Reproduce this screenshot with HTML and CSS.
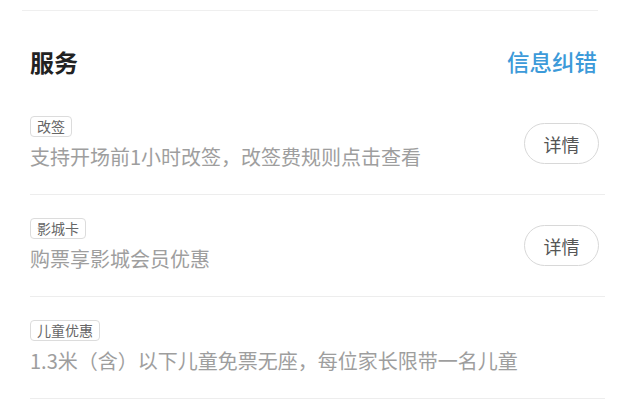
FILE: index.html
```html
<!DOCTYPE html>
<html lang="zh-CN">
<head>
<meta charset="utf-8">
<link rel="stylesheet" href="styles.css">
</head>
<body>
<div class="prev-divider"></div>
<section class="service">
  <header class="service-head">
    <h2 class="service-title">服务</h2>
    <a class="service-link">信息纠错</a>
  </header>
  <ul class="service-list">
    <li class="service-item">
      <div class="service-info">
        <span class="tag">改签</span>
        <p class="desc">支持开场前1小时改签，改签费规则点击查看</p>
      </div>
      <button class="detail-btn">详情</button>
    </li>
    <li class="service-item">
      <div class="service-info">
        <span class="tag">影城卡</span>
        <p class="desc">购票享影城会员优惠</p>
      </div>
      <button class="detail-btn">详情</button>
    </li>
    <li class="service-item">
      <div class="service-info">
        <span class="tag">儿童优惠</span>
        <p class="desc">1.3米（含）以下儿童免票无座，每位家长限带一名儿童</p>
      </div>
    </li>
  </ul>
</section>
</body>
</html>
```
FILE: styles.css
```css
* { box-sizing: border-box; }
body {
  margin: 0;
  background: #fff;
  font-family: "Noto Sans CJK SC", "Noto Sans", sans-serif;
}
.prev-divider {
  margin: 10px 22px 0;
  height: 1px;
  background: #efefef;
}
.service {
  padding: 0 20px 0 30px;
}
.service-head {
  display: flex;
  justify-content: space-between;
  align-items: center;
  height: 82px;
  padding-top: 18px;
}
.service-title {
  margin: 0;
  font-size: 24px;
  font-weight: 700;
  color: #222;
}
.service-link {
  font-size: 22.5px;
  font-weight: 500;
  color: #3c9ad9;
  margin-right: 3px;
}
.service-list {
  list-style: none;
  margin: 0 -5px 0 0;
  padding: 0;
}
.service-item {
  display: flex;
  align-items: center;
  justify-content: space-between;
  height: 102px;
  border-bottom: 1px solid #ededed;
  padding-right: 6px;
}
.service-info {
  display: flex;
  flex-direction: column;
  align-items: flex-start;
}
.tag {
  display: inline-block;
  height: 21px;
  line-height: 19px;
  padding: 0 6px;
  font-size: 14px;
  color: #666;
  border: 1px solid #dcdcdc;
  border-radius: 4px;
}
.desc {
  margin: 6px 0 0;
  font-size: 20px;
  line-height: 28px;
  color: #9e9e9e;
}
.detail-btn {
  width: 75px;
  height: 41px;
  border: 1px solid #d8d8d8;
  border-radius: 21px;
  background: #fff;
  font-family: inherit;
  font-size: 18px;
  color: #555;
  padding: 0;
}
```
